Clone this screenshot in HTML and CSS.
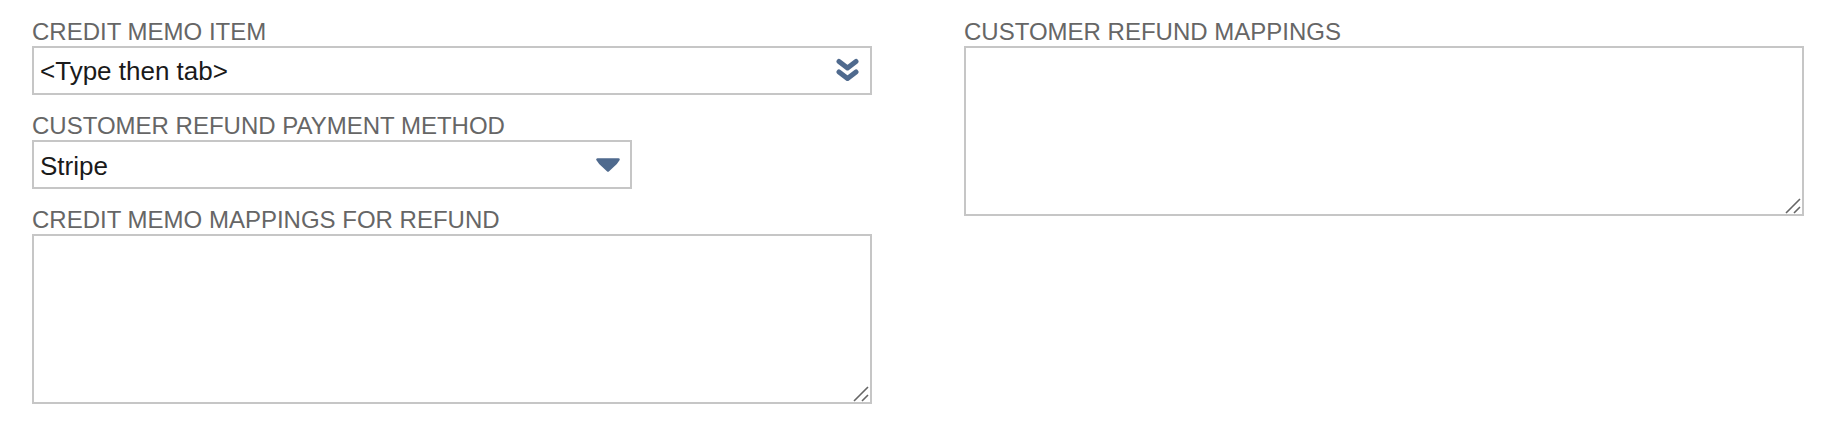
FILE: index.html
```html
<!DOCTYPE html>
<html lang="en">
<head>
    <meta charset="UTF-8">
    <meta name="viewport" content="width=device-width, initial-scale=1.0">
    <title>Refund Settings</title>
    <link rel="stylesheet" href="styles.css">
</head>
<body>
    <div class="form">
        <div class="column">
            <div class="field">
                <label for="creditMemoItem" class="field-label">Credit Memo Item</label>
                <div class="combo">
                    <input type="text" class="combo-input" id="creditMemoItem" value="<Type then tab>">
                    <svg class="combo-icon" width="25" height="25" viewBox="0 0 25 25">
                        <path d="M4 3.5 L12.5 10 L21 3.5 M4 14 L12.5 20.5 L21 14" fill="none" stroke="#4f6a8e" stroke-width="5" stroke-linecap="round" stroke-linejoin="round"/>
                    </svg>
                </div>
            </div>

            <div class="field">
                <label for="refundMethod" class="field-label">Customer Refund Payment Method</label>
                <div class="combo combo-short">
                    <select class="combo-select" id="refundMethod">
                        <option value="stripe">Stripe</option>
                    </select>
                    <svg class="caret-icon" width="24" height="14" viewBox="0 0 24 14">
                        <path d="M1.5 1.5 H22.5 L20 5 L12 12.5 L4 5 Z" fill="#4f6a8e" stroke="#4f6a8e" stroke-width="2.5" stroke-linejoin="round"/>
                    </svg>
                </div>
            </div>

            <div class="field">
                <label for="creditMemoMappings" class="field-label">Credit Memo Mappings for Refund</label>
                <div class="area-wrap">
                    <textarea class="area" id="creditMemoMappings"></textarea>
                    <svg class="grip" width="16" height="16" viewBox="0 0 16 16">
                        <path d="M1 15 L15 1 M9 15 L15 9" stroke="#666" stroke-width="1.6"/>
                    </svg>
                </div>
            </div>
        </div>

        <div class="column">
            <div class="field">
                <label for="customerRefundMappings" class="field-label">Customer Refund Mappings</label>
                <div class="area-wrap">
                    <textarea class="area" id="customerRefundMappings"></textarea>
                    <svg class="grip" width="16" height="16" viewBox="0 0 16 16">
                        <path d="M1 15 L15 1 M9 15 L15 9" stroke="#666" stroke-width="1.6"/>
                    </svg>
                </div>
            </div>
        </div>
    </div>
</body>
</html>
```

FILE: styles.css
```css
body {
    font-family: "Liberation Sans", Arial, sans-serif;
    margin: 0;
    padding: 18px 0 0 32px;
    background-color: #fff;
}
.form {
    display: grid;
    grid-template-columns: 840px 840px;
    column-gap: 92px;
    align-items: start;
}
.column {
    display: flex;
    flex-direction: column;
    gap: 17px;
}
.field {
    display: flex;
    flex-direction: column;
}
.field-label {
    font-size: 24px;
    line-height: 28px;
    color: #666;
    text-transform: uppercase;
}
.combo {
    display: flex;
    align-items: center;
    box-sizing: border-box;
    width: 840px;
    height: 49px;
    border: 2px solid #c6c6c6;
    padding: 0 10px 0 6px;
    background-color: #fff;
}
.combo-short {
    width: 600px;
}
.combo-input,
.combo-select {
    flex: 1;
    min-width: 0;
    border: none;
    outline: none;
    padding: 2px 0 0 0;
    margin: 0;
    font-family: "Liberation Sans", Arial, sans-serif;
    font-size: 26px;
    color: #1a1a1a;
    background: transparent;
    appearance: none;
    -webkit-appearance: none;
}
.combo-icon,
.caret-icon {
    flex-shrink: 0;
}
.area-wrap {
    position: relative;
    width: 840px;
    height: 170px;
}
.area {
    display: block;
    box-sizing: border-box;
    width: 100%;
    height: 100%;
    border: 2px solid #c6c6c6;
    resize: none;
    outline: none;
    margin: 0;
}
.grip {
    position: absolute;
    right: 3px;
    bottom: 2px;
}
```
